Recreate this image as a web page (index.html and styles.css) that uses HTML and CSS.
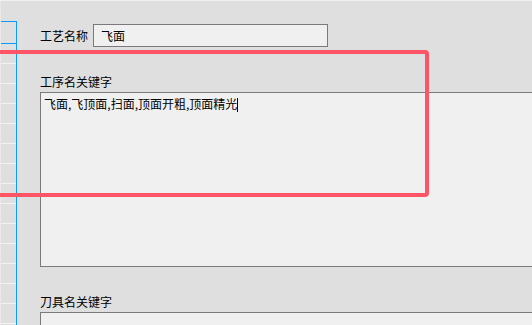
FILE: index.html
```html
<!DOCTYPE html>
<html lang="zh-CN">
<head>
  <meta charset="UTF-8">
  <meta name="viewport" content="width=device-width, initial-scale=1.0">
  <title>工艺设置</title>
  <link rel="stylesheet" href="styles.css">
</head>
<body>
  <div class="window">
    <!-- Left list -->
    <div class="side">
      <div class="side-list">
        <div class="side-row selected"></div>
        <div class="side-row"></div>
        <div class="side-row"></div>
        <div class="side-row"></div>
        <div class="side-row"></div>
        <div class="side-row"></div>
        <div class="side-row"></div>
        <div class="side-row"></div>
        <div class="side-row"></div>
        <div class="side-row"></div>
        <div class="side-row"></div>
        <div class="side-row"></div>
        <div class="side-row"></div>
        <div class="side-row"></div>
        <div class="side-row"></div>
      </div>
    </div>

    <!-- Form panel -->
    <div class="panel">
      <div class="field-row">
        <label class="label">工艺名称</label>
        <div class="input">飞面</div>
      </div>

      <label class="label block">工序名关键字</label>
      <div class="textbox big">飞面,飞顶面,扫面,顶面开粗,顶面精光<span class="caret"></span></div>

      <label class="label block">刀具名关键字</label>
      <div class="textbox"></div>
    </div>

    <!-- Highlight annotation -->
    <div class="highlight"></div>
  </div>
</body>
</html>
```

FILE: styles.css
```css
/* General Styling */
body {
  margin: 0;
  padding: 0;
  font-family: "Noto Sans CJK SC", "Noto Sans", sans-serif;
  font-size: 12px;
  color: #000;
  background-color: #dfdfdf;
  overflow: hidden;
}

.window {
  position: relative;
  display: flex;
  width: 532px;
  height: 325px;
  border-top: 1px solid #f0f0f0;
  box-sizing: border-box;
  overflow: hidden;
}

/* Left list */
.side {
  width: 17px;
  flex-shrink: 0;
  padding-top: 20px;
  border-left: 1px solid #e9e9e9;
  box-sizing: border-box;
}

.side-list {
  height: 100%;
  border-top: 1px solid #0b9bff;
  border-right: 1px solid #0b9bff;
}

.side-row {
  height: 19px;
  border-bottom: 1px solid #f3f3f3;
}

.side-row.selected {
  height: 21px;
  border-bottom-color: #0b9bff;
}

/* Form panel */
.panel {
  flex-grow: 1;
  padding: 23px 0 0 23px;
  display: flex;
  flex-direction: column;
}

.field-row {
  display: flex;
  align-items: center;
  gap: 5px;
}

.label {
  line-height: 16px;
  white-space: nowrap;
}

.label.block {
  margin-top: 27px;
  margin-bottom: 2px;
}

.input {
  width: 226px;
  height: 21px;
  line-height: 21px;
  padding-left: 7px;
  box-sizing: content-box;
  background: #f0f0f0;
  border: 1px solid #7a7a7a;
}

.textbox {
  width: 520px;
  height: 173px;
  padding: 3px 3px;
  box-sizing: border-box;
  line-height: 16px;
  background: #f0f0f0;
  border: 1px solid #7a7a7a;
  border-right: none;
  flex-shrink: 0;
}

.textbox.big {
  height: 175px;
}

.caret {
  display: inline-block;
  width: 1px;
  height: 14px;
  background: #000;
  vertical-align: -3px;
}

/* Highlight annotation */
.highlight {
  position: absolute;
  left: -10px;
  top: 49px;
  width: 439px;
  height: 147px;
  border: 4px solid #fd5466;
  border-radius: 4px;
  box-sizing: border-box;
}
```
